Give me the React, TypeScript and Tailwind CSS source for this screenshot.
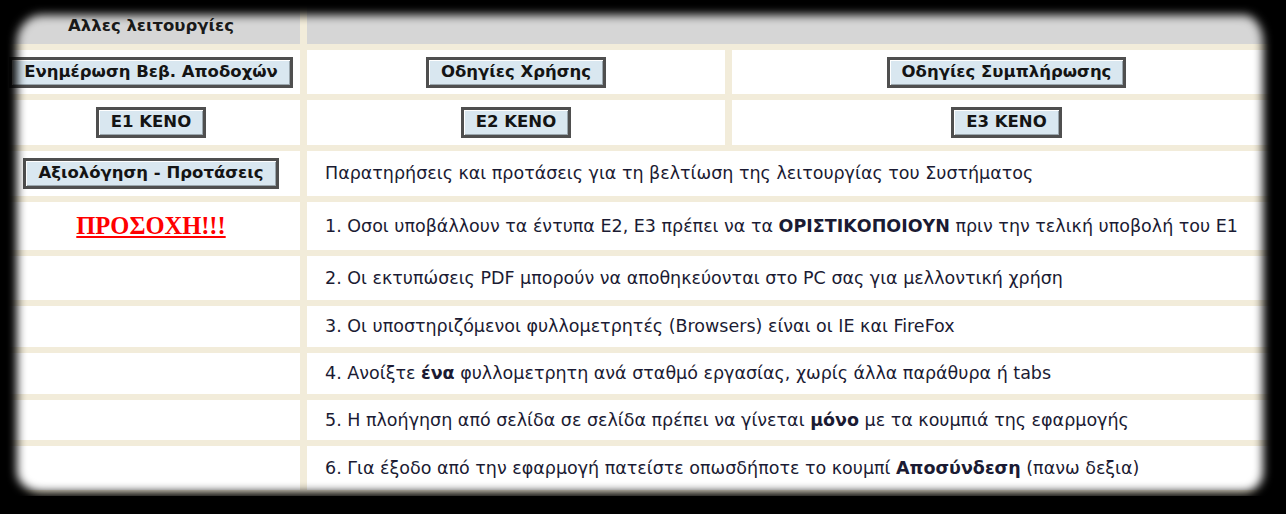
import React from "react";

const body = "font-['DejaVu_Sans',sans-serif] text-[17.5px] text-[#1b1b33]";

function Btn({ children }: { children: React.ReactNode }) {
  return (
    <button className="h-[31px] px-[12px] border-[3px] border-[#4f4f4f] bg-[#d9e7f0] shadow-[inset_1px_1px_0_#ffffff,inset_-1px_-1px_0_#9aa6ad] font-['DejaVu_Sans',sans-serif] text-[16.5px] leading-none font-bold text-[#141414] whitespace-nowrap">
      {children}
    </button>
  );
}

function Cell({ children, center }: { children?: React.ReactNode; center?: boolean }) {
  return (
    <div className={`bg-white flex items-center ${center ? "justify-center" : ""}`}>
      {children}
    </div>
  );
}

function Note({ children }: { children: React.ReactNode }) {
  return (
    <div className={`col-span-2 bg-white flex items-center pl-[18px] whitespace-nowrap ${body}`}>
      <span>{children}</span>
    </div>
  );
}

export default function App() {
  return (
    <div className="relative w-[1286px] h-[514px] bg-black overflow-hidden">
      <div className="w-[1290px] pl-[2px] bg-[#f2ecda]">
        <div className="grid grid-cols-[298px_418px_549px] grid-rows-[44px_44px_45px_45px_48px_44px_41px_41px_40px_44px] gap-x-[7px] gap-y-[6px] pb-[6px]">
          {/* header */}
          <div className="bg-[#d6d6d6] flex items-center justify-center font-['DejaVu_Sans',sans-serif] text-[16.5px] font-bold text-[#1a1a1a] pt-[8px]">
            Αλλες λειτουργίες
          </div>
          <div className="col-span-2 bg-[#d6d6d6]" />

          <Cell center><Btn>Ενημέρωση Βεβ. Αποδοχών</Btn></Cell>
          <Cell center><Btn>Οδηγίες Χρήσης</Btn></Cell>
          <Cell center><Btn>Οδηγίες Συμπλήρωσης</Btn></Cell>

          <Cell center><Btn>E1 KENO</Btn></Cell>
          <Cell center><Btn>E2 KENO</Btn></Cell>
          <Cell center><Btn>E3 KENO</Btn></Cell>

          <Cell center><Btn>Αξιολόγηση - Προτάσεις</Btn></Cell>
          <Note>Παρατηρήσεις και προτάσεις για τη βελτίωση της λειτουργίας του Συστήματος</Note>

          <Cell center>
            <span className="font-['Liberation_Serif',serif] text-[24.5px] font-bold text-[#ff0000] underline">
              ΠΡΟΣΟΧΗ!!!
            </span>
          </Cell>
          <Note>
            1. Οσοι υποβάλλουν τα έντυπα Ε2, Ε3 πρέπει να τα <b>ΟΡΙΣΤΙΚΟΠΟΙΟΥΝ</b> πριν την τελική υποβολή του Ε1
          </Note>

          <Cell />
          <Note>2. Οι εκτυπώσεις PDF μπορούν να αποθηκεύονται στο PC σας για μελλοντική χρήση</Note>

          <Cell />
          <Note>3. Οι υποστηριζόμενοι φυλλομετρητές (Browsers) είναι οι IE και FireFox</Note>

          <Cell />
          <Note>
            4. Ανοίξτε <b>ένα</b> φυλλομετρητη ανά σταθμό εργασίας, χωρίς άλλα παράθυρα ή tabs
          </Note>

          <Cell />
          <Note>
            5. Η πλοήγηση από σελίδα σε σελίδα πρέπει να γίνεται <b>μόνο</b> με τα κουμπιά της εφαρμογής
          </Note>

          <Cell />
          <Note>
            6. Για έξοδο από την εφαρμογή πατείστε οπωσδήποτε το κουμπί <b>Αποσύνδεση</b> (πανω δεξια)
          </Note>
        </div>
      </div>

      {/* soft black frame over the page edges */}
      <div className="pointer-events-none absolute -left-[30px] -top-[30px] -right-[30px] -bottom-[30px] rounded-[72px] border-solid border-black border-l-[47px] border-t-[45px] border-r-[53px] border-b-[52px] blur-[5px]" />
    </div>
  );
}
